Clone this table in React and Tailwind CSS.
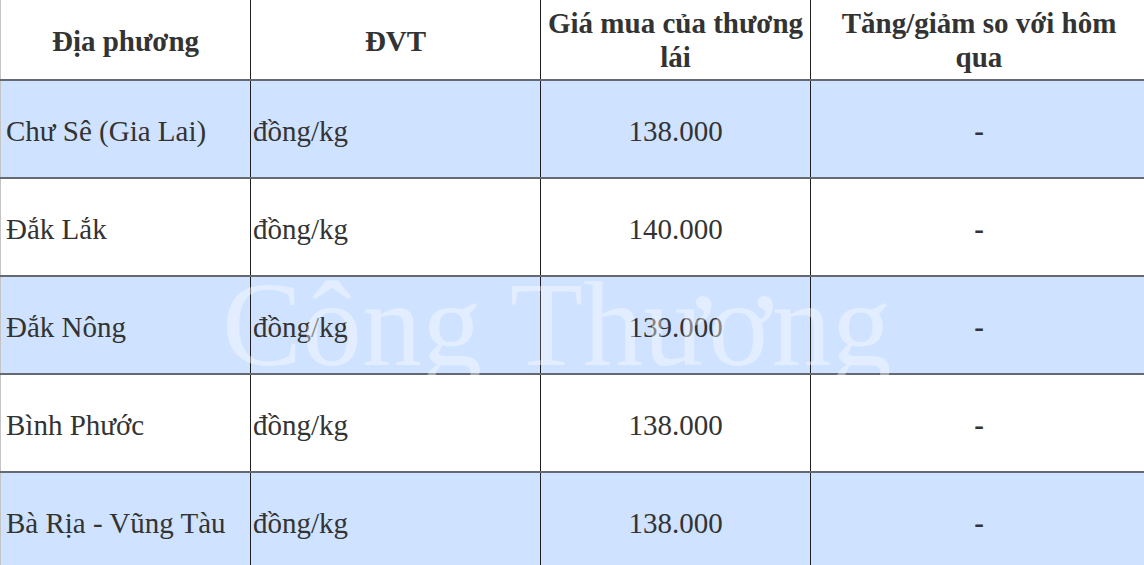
const ROWS = [
  { place: 'Chư Sê (Gia Lai)', price: '138.000', shaded: true },
  { place: 'Đắk Lắk', price: '140.000', shaded: false },
  { place: 'Đắk Nông', price: '139.000', shaded: true },
  { place: 'Bình Phước', price: '138.000', shaded: false },
  { place: 'Bà Rịa - Vũng Tàu', price: '138.000', shaded: true },
];

const cell = 'border-r border-r-[#1f1f1f] border-b-2 border-b-[#646973] align-middle';

export default function App() {
  return (
    <div className="relative w-[1144px] h-[565px] overflow-hidden bg-white text-[#333] font-['Liberation_Serif','Times_New_Roman',serif]">
      <table className="table-fixed border-collapse w-[1147px] text-[29px] leading-[32px]">
        <colgroup>
          <col className="w-[250px]" />
          <col className="w-[290px]" />
          <col className="w-[270px]" />
          <col className="w-[337px]" />
        </colgroup>
        <thead>
          <tr className="h-[80px] bg-white leading-[34px]">
            <th className={`${cell} border-l border-l-[#c4c4c4] font-bold text-center px-1 pt-[3px]`}>Địa phương</th>
            <th className={`${cell} font-bold text-center px-1 pt-[3px]`}>ĐVT</th>
            <th className={`${cell} font-bold text-center px-1`}>Giá mua của thương lái</th>
            <th className={`${cell} font-bold text-center px-6`}>Tăng/giảm so với hôm qua</th>
          </tr>
        </thead>
        <tbody>
          {ROWS.map((row) => (
            <tr key={row.place} className={`h-[98px] ${row.shaded ? 'bg-[#cfe2ff]' : 'bg-white'}`}>
              <td className={`${cell} border-l border-l-[#c4c4c4] pl-[5px] pt-[3px] whitespace-nowrap`}>{row.place}</td>
              <td className={`${cell} pl-[2px] pt-[3px]`}>đồng/kg</td>
              <td className={`${cell} text-center pt-[3px]`}>{row.price}</td>
              <td className={`${cell} text-center font-bold pt-[3px]`}>-</td>
            </tr>
          ))}
        </tbody>
      </table>

      {/* watermark */}
      <div className="pointer-events-none absolute left-[222px] top-[265px] text-[120px] leading-none whitespace-nowrap text-white/40 select-none">
        Công Thương
      </div>
    </div>
  );
}
